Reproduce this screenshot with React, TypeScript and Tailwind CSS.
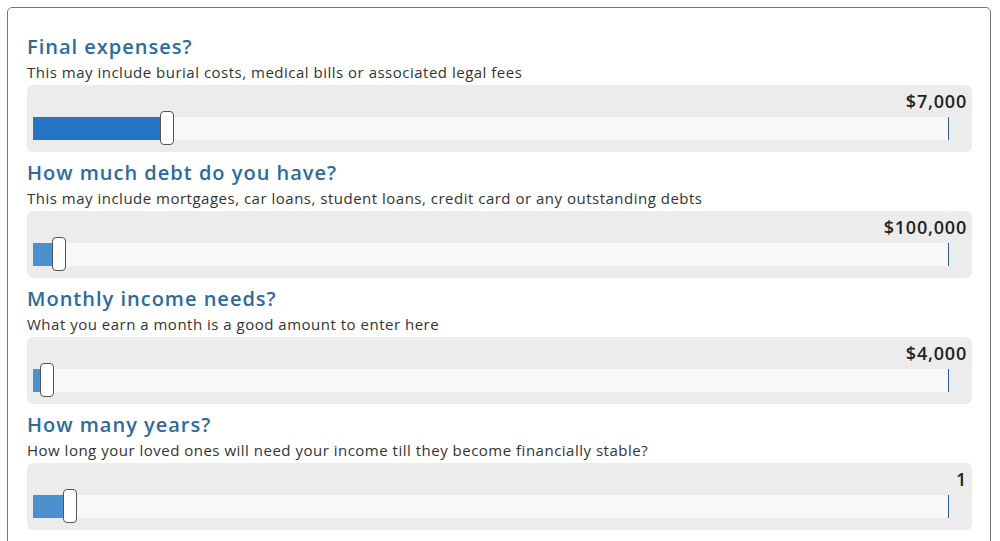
type SliderProps = {
  title: string;
  description: string;
  value: string;
  fill: number;
  fillColor: string;
};

const sections: SliderProps[] = [
  {
    title: "Final expenses?",
    description: "This may include burial costs, medical bills or associated legal fees",
    value: "$7,000",
    fill: 127,
    fillColor: "bg-[#2474c6]",
  },
  {
    title: "How much debt do you have?",
    description: "This may include mortgages, car loans, student loans, credit card or any outstanding debts",
    value: "$100,000",
    fill: 19,
    fillColor: "bg-[#4b90cf]",
  },
  {
    title: "Monthly income needs?",
    description: "What you earn a month is a good amount to enter here",
    value: "$4,000",
    fill: 7,
    fillColor: "bg-[#4b90cf]",
  },
  {
    title: "How many years?",
    description: "How long your loved ones will need your income till they become financially stable?",
    value: "1",
    fill: 30,
    fillColor: "bg-[#4b90cf]",
  },
];

const SliderSection = ({ title, description, value, fill, fillColor }: SliderProps) => {
  return (
    <div>
      <h2 className="text-[20px] leading-[26px] font-semibold tracking-[1px] text-[#2c6b9c]">{title}</h2>
      <p className="text-[15px] leading-[20px] tracking-[0.5px] text-[#333] mt-[2px]">{description}</p>
      <div className="bg-[#ececec] rounded-md mt-[3px] h-[67px] pl-[6px] pr-[5px]">
        <div className="h-[32px] flex items-end justify-end text-[18px] font-semibold tracking-[0.8px] text-[#222] pb-[2px]">
          {value}
        </div>
        <div className="relative h-[23px] mr-[18px] bg-[#f8f8f8] flex">
          <div className={`h-full ${fillColor}`} style={{ width: fill }} />
          <div className="flex-1" />
          <div className="w-[1px] h-full bg-[#2c5a8a]" />
          <div
            className="absolute top-[-6px] w-[14px] h-[34px] bg-white border border-[#555] rounded-[4px]"
            style={{ left: fill }}
          />
        </div>
      </div>
    </div>
  );
};

export default function App() {
  return (
    <div className="w-[1000px] h-[541px] overflow-hidden bg-white font-['Open_Sans',sans-serif] pt-[7px] pl-[7px] pr-[9px]">
      <div className="border border-[#777] rounded-[5px] pt-[26px] pl-[19px] pr-[18px] h-[560px] flex flex-col gap-[8px]">
        {sections.map((s) => (
          <SliderSection key={s.title} {...s} />
        ))}
      </div>
    </div>
  );
}
